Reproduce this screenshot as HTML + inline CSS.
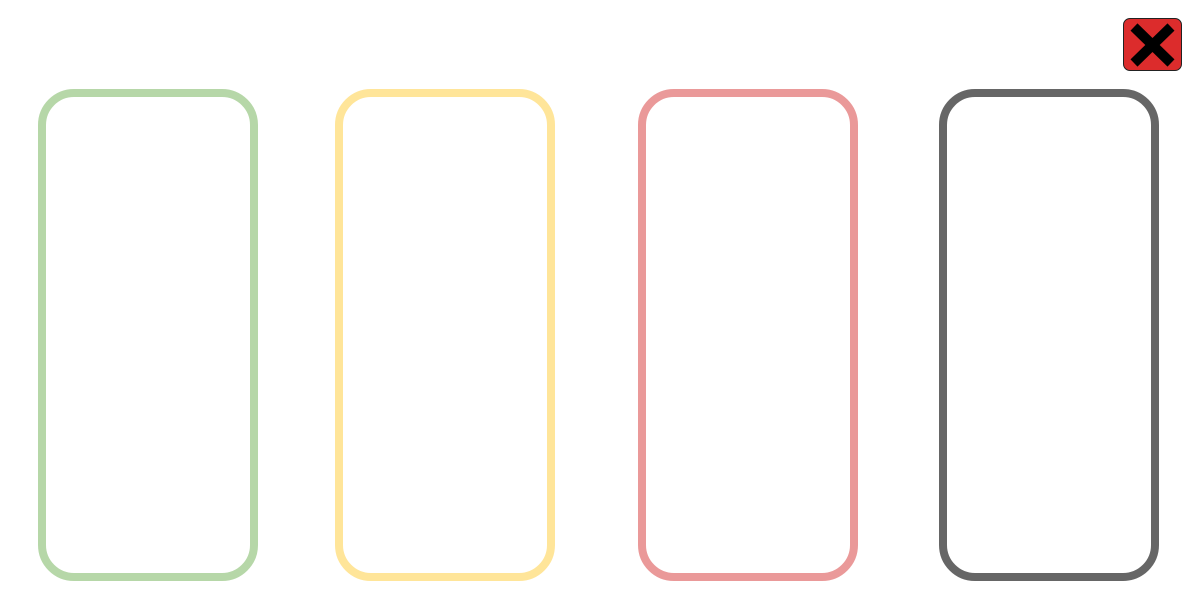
<!DOCTYPE html>
<html><head><style>
html,body{margin:0;padding:0;background:#fff;width:1200px;height:600px;overflow:hidden;position:relative}
.c{position:absolute;top:89px;width:204px;height:476px;border:8px solid;border-radius:36px}
.x{position:absolute;left:1123px;top:18px;width:57px;height:51px;background:#dc2c2c;border:1px solid #222;border-radius:7px}
</style></head><body>
<div class="c" style="left:38px;border-color:#b6d7a8"></div>
<div class="c" style="left:335px;border-color:#ffe599"></div>
<div class="c" style="left:638px;border-color:#ea9999"></div>
<div class="c" style="left:939px;border-color:#666666"></div>
<div class="x"><svg width="57" height="51" viewBox="0 0 57 51"><path d="M10 8 L47 44 M47 8 L10 44" stroke="#000" stroke-width="10"/></svg></div>
</body></html>
